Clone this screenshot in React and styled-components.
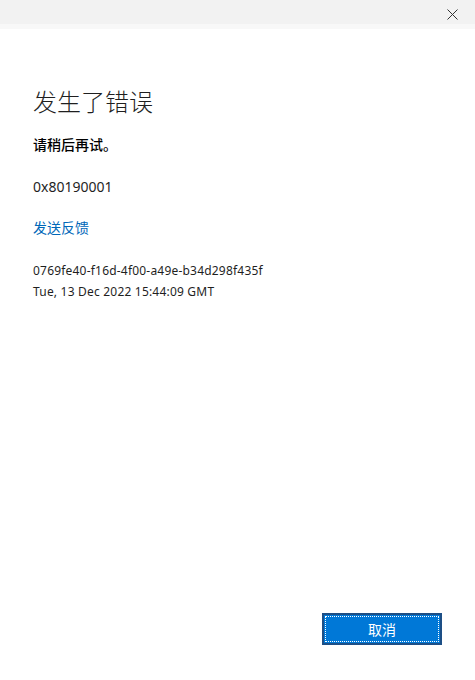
import React from "react"
import styled, { createGlobalStyle } from "styled-components"

const Global = createGlobalStyle`
  html, body, #root { margin: 0; height: 100%; }
  body {
    background: #ffffff;
    font-family: "Noto Sans", "Noto Sans CJK SC", sans-serif;
    color: #000;
  }
`

const Page = styled.div`
  height: 100%;
  display: flex;
  flex-direction: column;
`

const TitleBar = styled.div`
  height: 24px;
  background: #f2f2f2;
  border-bottom: 5px solid #f8f8f8;
  display: flex;
  justify-content: flex-end;
  align-items: center;
`

const CloseButton = styled.button`
  width: 46px;
  height: 24px;
  border: 0;
  background: transparent;
  display: flex;
  align-items: center;
  justify-content: center;
  padding: 0;
  margin-top: 4px;
`

const Content = styled.div`
  flex: 1;
  padding: 56px 33px 0;
  display: flex;
  flex-direction: column;
`

const Title = styled.h1`
  margin: 0;
  font-size: 24px;
  font-weight: 300;
  line-height: 32px;
  color: #1f1f1f;
  font-family: "Noto Sans CJK SC", sans-serif;
`

const Message = styled.p`
  margin: 17px 0 0;
  font-size: 14px;
  font-weight: 500;
  line-height: 20px;
  font-family: "Noto Sans CJK SC", sans-serif;
`

const Code = styled.p`
  margin: 23px 0 0;
  font-size: 14px;
  line-height: 20px;
  color: #1f1f1f;
`

const Link = styled.a`
  margin-top: 20px;
  font-size: 14px;
  line-height: 20px;
  color: #0067b8;
  text-decoration: none;
  font-family: "Noto Sans CJK SC", sans-serif;
`

const Details = styled.div`
  margin-top: 23px;
  font-size: 12px;
  line-height: 21px;
  letter-spacing: 0.2px;
  color: #1f1f1f;
`

const Footer = styled.div`
  display: flex;
  justify-content: flex-end;
  padding: 0 33px 35px;
`

const PrimaryButton = styled.button`
  width: 120px;
  height: 32px;
  background: #0078d7;
  border: 2px solid #1d4f86;
  outline: 1px dotted #ffffff;
  outline-offset: -4px;
  color: #ffffff;
  font-size: 14px;
  font-family: "Noto Sans CJK SC", sans-serif;
  padding: 0;
`

export default function App() {
  return (
    <>
      <Global />
      <Page>
        <TitleBar>
          <CloseButton aria-label="close">
            <svg width="11" height="11" viewBox="0 0 11 11">
              <path d="M0.5 0.5L10.5 10.5M10.5 0.5L0.5 10.5" stroke="#333" strokeWidth="1" />
            </svg>
          </CloseButton>
        </TitleBar>
        <Content>
          <Title>发生了错误</Title>
          <Message>请稍后再试。</Message>
          <Code>0x80190001</Code>
          <Link href="#">发送反馈</Link>
          <Details>
            <div>0769fe40-f16d-4f00-a49e-b34d298f435f</div>
            <div>Tue, 13 Dec 2022 15:44:09 GMT</div>
          </Details>
        </Content>
        <Footer>
          <PrimaryButton>取消</PrimaryButton>
        </Footer>
      </Page>
    </>
  )
}
